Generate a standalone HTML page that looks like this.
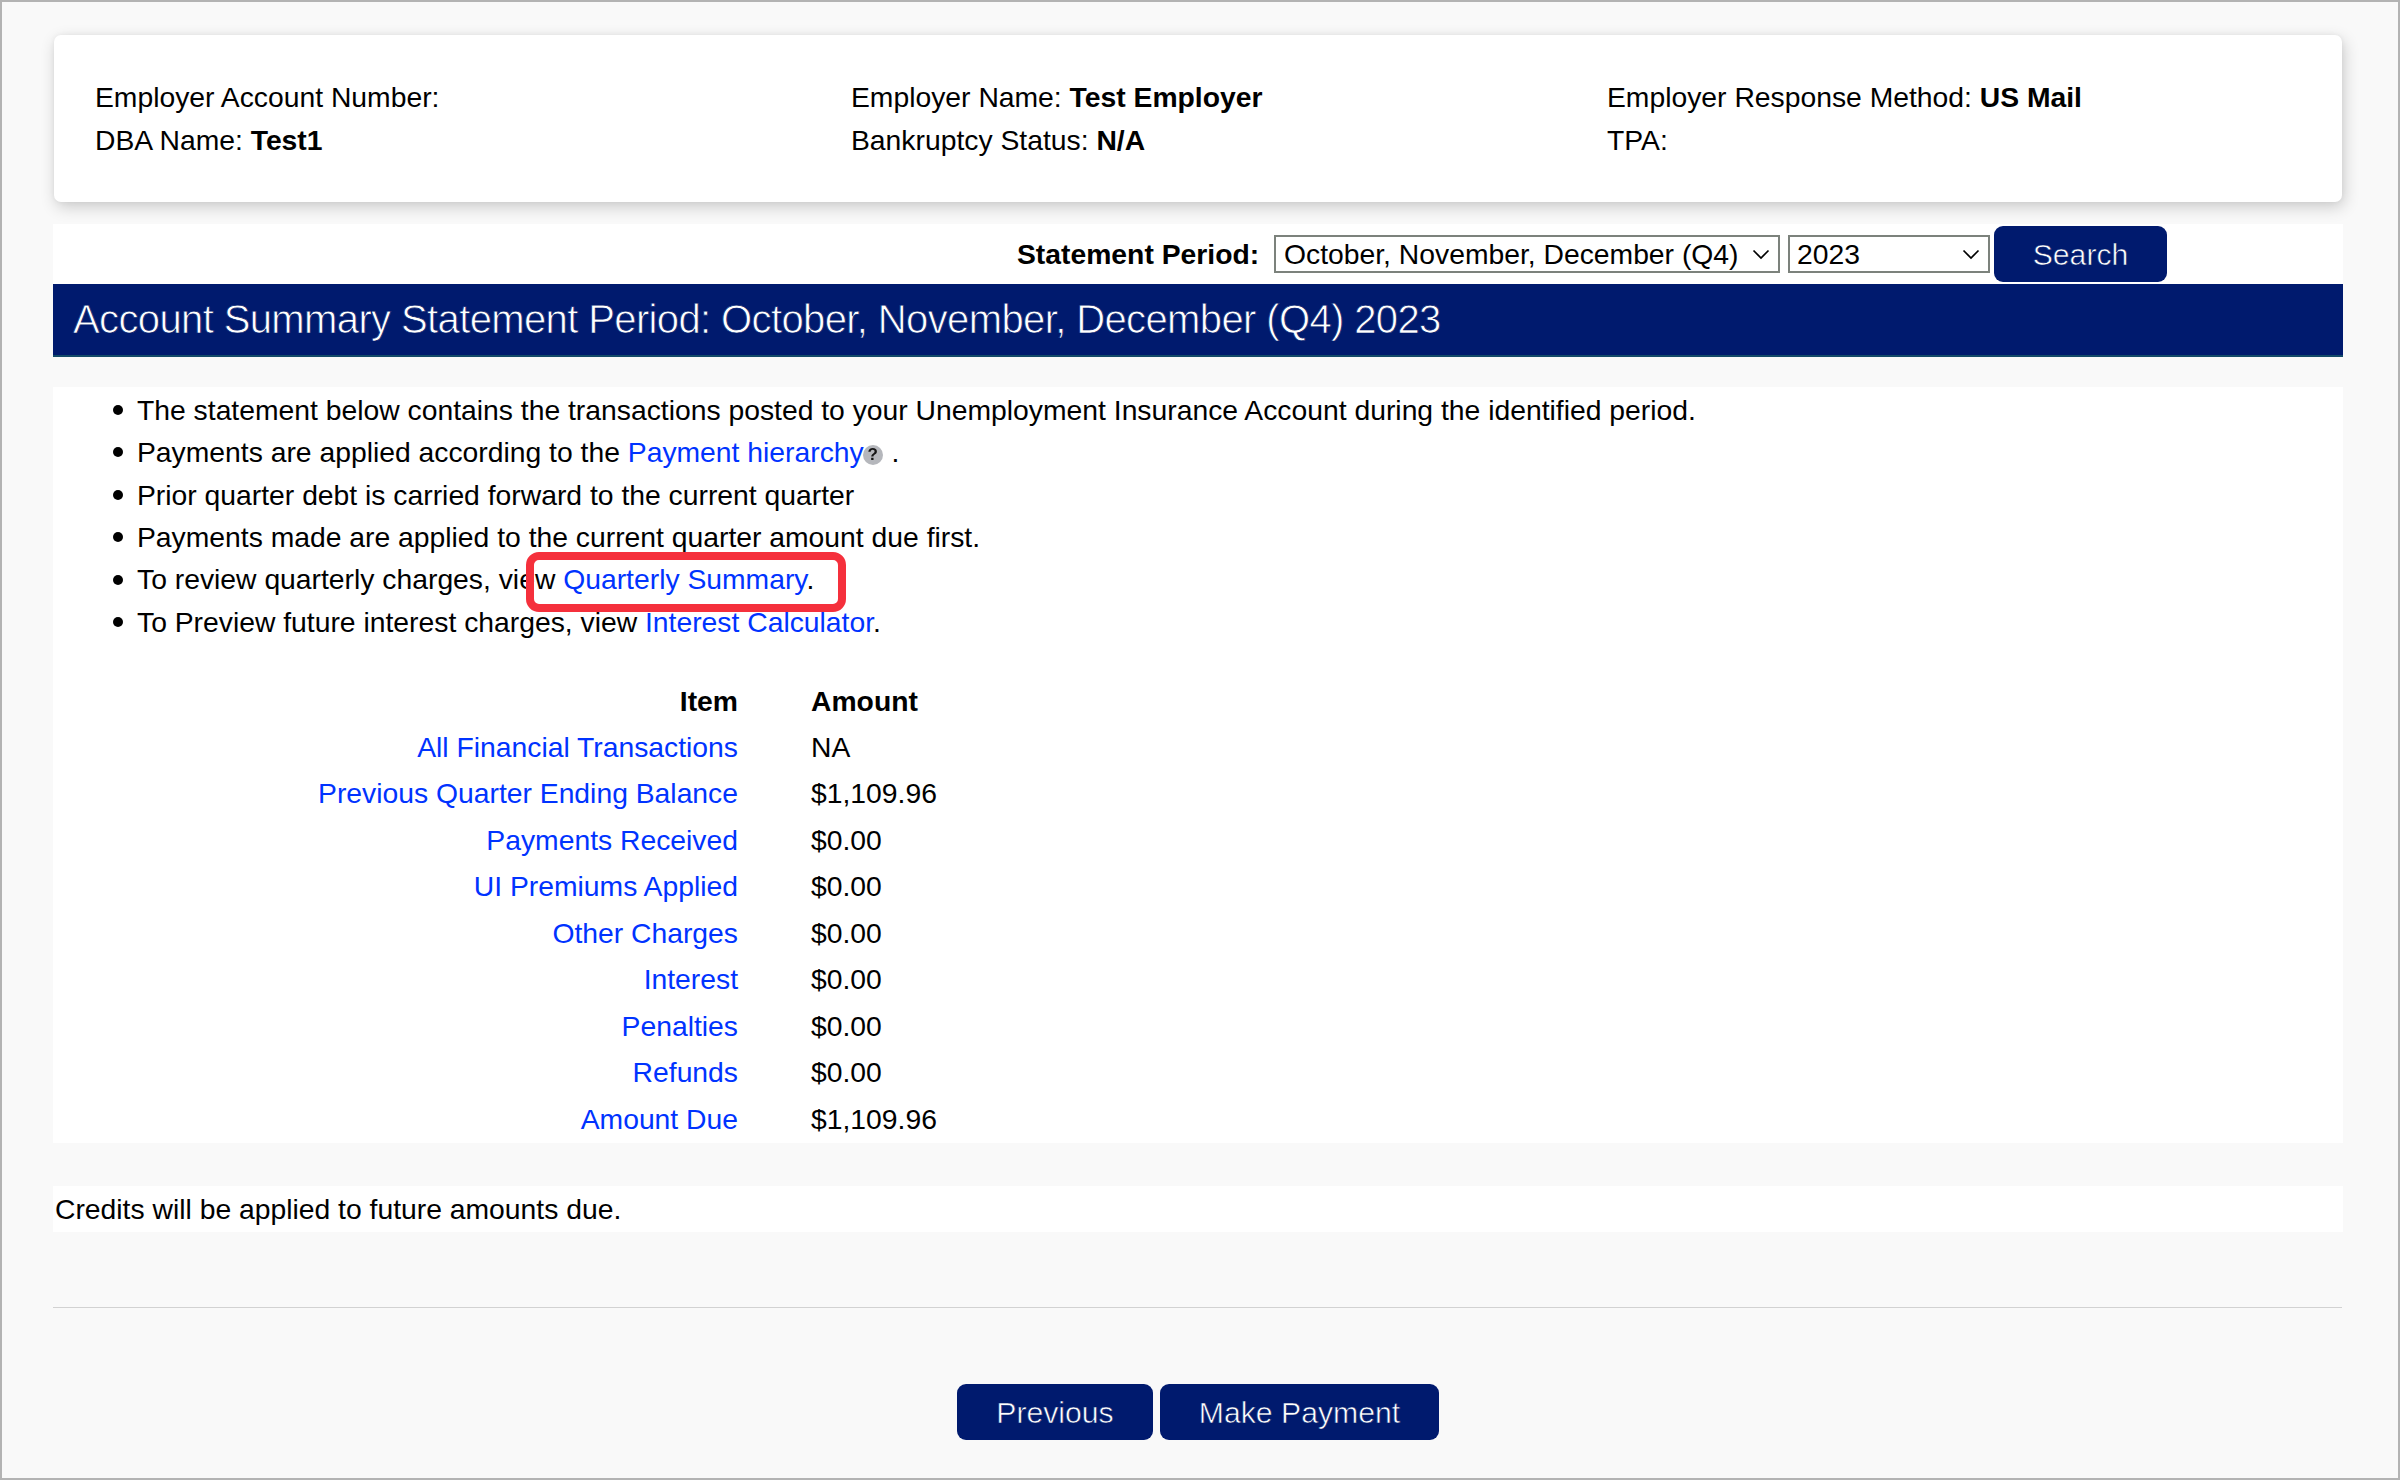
<!DOCTYPE html>
<html>
<head>
<meta charset="utf-8">
<style>
html,body{margin:0;padding:0;}
body{width:2400px;height:1480px;overflow:hidden;position:relative;background:#f9f9f9;font-family:"Liberation Sans",sans-serif;color:#000;}
.frame{position:absolute;left:0;top:0;width:2396px;height:1476px;border:2px solid #b3b3b3;}
.abs{position:absolute;}
.card{left:54px;top:35px;width:2288px;height:167px;background:#fff;border-radius:7px;box-shadow:2px 5px 16px rgba(0,0,0,0.19),0 0 5px rgba(0,0,0,0.05);}
.ct{position:absolute;font-size:28.3px;line-height:42px;white-space:nowrap;}
b{font-weight:bold;}
.row{left:53px;top:224px;width:2290px;height:60px;background:#fff;}
.lbl{position:absolute;left:1017px;top:236px;font-size:28.3px;font-weight:bold;line-height:36px;white-space:nowrap;}
.sel{position:absolute;box-sizing:border-box;border:2px solid #7c827c;background:#fff;font-size:28.3px;line-height:35px;white-space:nowrap;}
.chev{position:absolute;}
.btn{position:absolute;background:#001a6e;border-radius:9px;color:#fff;font-size:30.2px;-webkit-text-stroke:0.6px #001a6e;text-align:center;white-space:nowrap;}
.banner{left:53px;top:284px;width:2290px;height:71px;background:#001a6e;border-bottom:2px solid #124a6a;}
.htxt{position:absolute;left:73px;top:295px;font-size:40px;letter-spacing:-0.62px;line-height:48px;color:#fff;white-space:nowrap;-webkit-text-stroke:0.75px #001a6e;}
.sec{left:53px;top:387px;width:2290px;height:756px;background:#fff;}
.li{position:absolute;left:137px;font-size:28.3px;line-height:42px;white-space:nowrap;}
.dot{position:absolute;left:113px;width:10px;height:10px;border-radius:50%;background:#000;}
a{color:#0033ff;text-decoration:none;}
.it{position:absolute;right:1662px;font-size:28.3px;line-height:36px;white-space:nowrap;text-align:right;}
.am{position:absolute;left:811px;font-size:28.3px;line-height:36px;white-space:nowrap;}
.credit{left:53px;top:1186px;width:2290px;height:46px;background:#fff;}
.hr{left:53px;top:1307px;width:2289px;height:1px;background:#d2d2d2;}
.redbox{position:absolute;left:526px;top:552px;width:320px;height:60px;box-sizing:border-box;border:8px solid #f5303c;border-radius:13px;}
</style>
</head>
<body>
<div class="frame"></div>

<div class="abs card"></div>
<div class="ct" style="left:95px;top:76px;">Employer Account Number:</div>
<div class="ct" style="left:95px;top:119px;">DBA Name: <b>Test1</b></div>
<div class="ct" style="left:851px;top:76px;">Employer Name: <b>Test Employer</b></div>
<div class="ct" style="left:851px;top:119px;">Bankruptcy Status: <b>N/A</b></div>
<div class="ct" style="left:1607px;top:76px;">Employer Response Method: <b>US Mail</b></div>
<div class="ct" style="left:1607px;top:119px;">TPA:</div>

<div class="abs row"></div>
<div class="lbl">Statement Period:</div>
<div class="sel" style="left:1274px;top:235px;width:506px;height:38px;padding-left:8px;">October, November, December (Q4)</div>
<svg class="chev" style="left:1752px;top:249px;" width="18" height="11" viewBox="0 0 18 11"><path d="M1.5 1.5 L9 9 L16.5 1.5" fill="none" stroke="#000" stroke-width="1.7"/></svg>
<div class="sel" style="left:1788px;top:235px;width:202px;height:38px;padding-left:7px;">2023</div>
<svg class="chev" style="left:1962px;top:249px;" width="18" height="11" viewBox="0 0 18 11"><path d="M1.5 1.5 L9 9 L16.5 1.5" fill="none" stroke="#000" stroke-width="1.7"/></svg>
<div class="btn" style="left:1994px;top:226px;width:173px;height:56px;line-height:58px;">Search</div>

<div class="abs banner"></div>
<div class="htxt">Account Summary Statement Period: October, November, December (Q4) 2023</div>

<div class="abs sec"></div>
<div class="dot" style="top:405px;"></div>
<div class="li" style="top:389px;">The statement below contains the transactions posted to your Unemployment Insurance Account during the identified period.</div>
<div class="dot" style="top:447px;"></div>
<div class="li" style="top:431px;">Payments are applied according to the <a>Payment hierarchy</a><span style="display:inline-block;width:20px;height:20px;border-radius:50%;background:#b5b7bc;vertical-align:-3px;position:relative;margin-left:-1px;margin-right:1px;filter:blur(0.4px);"><span style="position:absolute;left:0;top:0;width:20px;text-align:center;font-size:17px;line-height:20px;font-weight:bold;color:#151515;">?</span></span> .</div>
<div class="dot" style="top:490px;"></div>
<div class="li" style="top:474px;">Prior quarter debt is carried forward to the current quarter</div>
<div class="dot" style="top:532px;"></div>
<div class="li" style="top:516px;">Payments made are applied to the current quarter amount due first.</div>
<div class="dot" style="top:575px;"></div>
<div class="li" style="top:558px;">To review quarterly charges, view <a>Quarterly Summary</a>.</div>
<div class="dot" style="top:617px;"></div>
<div class="li" style="top:601px;">To Preview future interest charges, view <a>Interest Calculator</a>.</div>
<div class="redbox"></div>

<div class="it" style="top:683px;font-weight:bold;">Item</div>
<div class="am" style="top:683px;font-weight:bold;">Amount</div>
<div class="it" style="top:729px;"><a>All Financial Transactions</a></div>
<div class="am" style="top:729px;">NA</div>
<div class="it" style="top:775px;"><a>Previous Quarter Ending Balance</a></div>
<div class="am" style="top:775px;">$1,109.96</div>
<div class="it" style="top:822px;"><a>Payments Received</a></div>
<div class="am" style="top:822px;">$0.00</div>
<div class="it" style="top:868px;"><a>UI Premiums Applied</a></div>
<div class="am" style="top:868px;">$0.00</div>
<div class="it" style="top:915px;"><a>Other Charges</a></div>
<div class="am" style="top:915px;">$0.00</div>
<div class="it" style="top:961px;"><a>Interest</a></div>
<div class="am" style="top:961px;">$0.00</div>
<div class="it" style="top:1008px;"><a>Penalties</a></div>
<div class="am" style="top:1008px;">$0.00</div>
<div class="it" style="top:1054px;"><a>Refunds</a></div>
<div class="am" style="top:1054px;">$0.00</div>
<div class="it" style="top:1101px;"><a>Amount Due</a></div>
<div class="am" style="top:1101px;">$1,109.96</div>

<div class="abs credit"></div>
<div class="ct" style="left:55px;top:1188px;">Credits will be applied to future amounts due.</div>

<div class="abs hr"></div>

<div class="btn" style="left:957px;top:1384px;width:196px;height:56px;line-height:58px;">Previous</div>
<div class="btn" style="left:1160px;top:1384px;width:279px;height:56px;line-height:58px;">Make Payment</div>
</body>
</html>
